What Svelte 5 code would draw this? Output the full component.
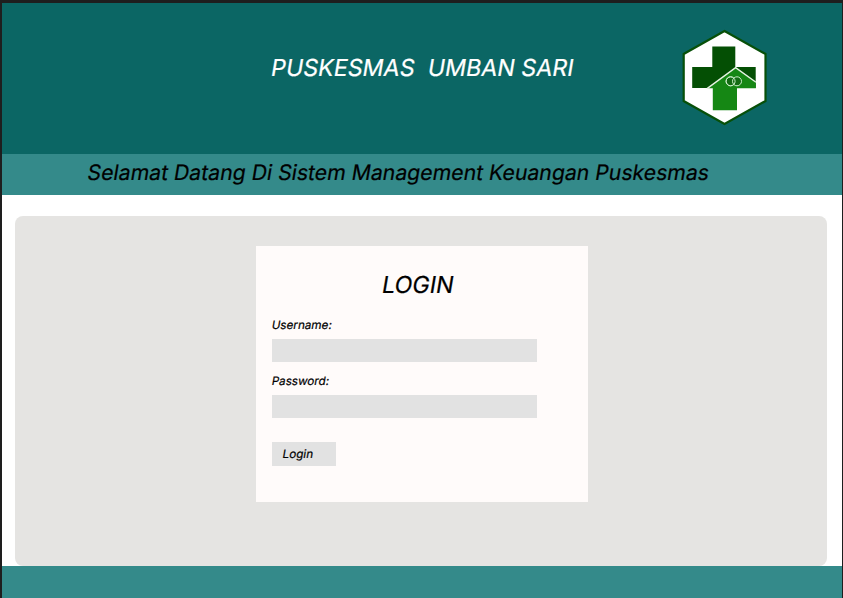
<script>
  let username = $state('');
  let password = $state('');
</script>

<div class="page">
  <header>
    <h1><span class="slant">PUSKESMAS&nbsp; UMBAN SARI</span></h1>
    <svg class="logo" width="90" height="100" viewBox="680 28 90 100" aria-hidden="true">
      <polygon points="724.5,31 765.5,54 765.5,101 724.5,124 683.7,101 683.7,54" fill="#fff" stroke="#075009" stroke-width="2.2" />
      <path d="M712.3 46.5H735.3V67H755.7V88H692.2V67H712.3Z" fill="#044f04" />
      <path d="M708 88.2 735.6 67.4 755.8 81.5V88.2H737V110.3H712.8V88.2Z" fill="#158714" />
      <path d="M707 88.6 735.6 67.6 756 82.3" fill="none" stroke="#e6f3e3" stroke-width="1.4" />
      <g fill="#126b12" stroke="#c9edc8" stroke-width="1">
        <circle cx="730.6" cy="81.3" r="4.5" />
        <circle cx="737" cy="81.3" r="4.5" />
        <circle cx="730.6" cy="81.3" r="4.5" fill="none" />
      </g>
    </svg>
  </header>
  <div class="banner"><span class="slant">Selamat Datang Di Sistem Management Keuangan Puskesmas</span></div>
  <main>
    <div class="panel">
      <form onsubmit={(e) => e.preventDefault()}>
        <h2><span class="slant">LOGIN</span></h2>
        <label for="username"><span class="slant">Username:</span></label>
        <input id="username" type="text" bind:value={username} />
        <label for="password"><span class="slant">Password:</span></label>
        <input id="password" type="password" bind:value={password} />
        <button type="submit"><span class="slant">Login</span></button>
      </form>
    </div>
  </main>
  <footer></footer>
</div>

<style>
  :global(body) {
    margin: 0;
    background: #1e1e1e;
  }
  .page {
    box-sizing: border-box;
    width: 843px;
    height: 598px;
    border: solid #1e1e1e;
    border-width: 3px 1px 0 2px;
    display: flex;
    flex-direction: column;
    overflow: hidden;
    background: #fff;
    color: #000;
    font-family: Inter, sans-serif;
    font-optical-sizing: none;
  }
  /* Slants the upright letterforms, which keeps the two-storey "a". */
  .slant {
    display: inline-block;
    transform: skewX(-9.4deg);
    transform-origin: 0 80%;
    -webkit-text-stroke: 0.2px currentColor;
  }
  header {
    height: 151px;
    flex: none;
    display: flex;
    background: #0b6664;
  }
  h1 {
    margin: 50px 0 0 267.5px;
    width: 410.5px;
    font-size: 23.25px;
    line-height: 29px;
    font-weight: 400;
    color: #fff;
    white-space: nowrap;
  }
  .logo {
    display: block;
    margin-top: 25px;
    flex: none;
  }
  .banner {
    height: 41px;
    flex: none;
    box-sizing: border-box;
    background: #348a8a;
    font-size: 21.22px;
    line-height: 37px;
    padding-left: 84px;
    white-space: nowrap;
  }
  main {
    height: 371px;
    flex: none;
    box-sizing: border-box;
    padding: 21px 15px 0 13px;
  }
  .panel {
    height: 350px;
    box-sizing: border-box;
    padding: 30px 0 0 240.5px;
    border-radius: 8px;
    background: #e5e4e2;
  }
  form {
    box-sizing: border-box;
    width: 332px;
    height: 256px;
    padding: 24px 16px 0 16.5px;
    display: flex;
    flex-direction: column;
    align-items: flex-start;
    background: #fffbfa;
  }
  h2 {
    margin: 0 0 18px 108.5px;
    font-size: 23.3px;
    line-height: 29px;
    font-weight: 400;
  }
  label {
    margin: 0 0 6px -0.7px;
    font-size: 11.7px;
    line-height: 16px;
  }
  input {
    box-sizing: border-box;
    width: 265px;
    height: 23px;
    margin: 0 0 11px;
    padding: 0 8px;
    border: 0;
    border-radius: 0;
    background: #e2e2e2;
    font: italic 11.7px Inter, sans-serif;
  }
  button {
    width: 64px;
    height: 24px;
    margin-top: 13px;
    padding: 0 0 1px 10.4px;
    border: 0;
    border-radius: 0;
    background: #e2e2e2;
    color: #000;
    text-align: left;
    font: 11.7px Inter, sans-serif;
  }
  footer {
    flex: 1;
    background: #348a8a;
  }
</style>
